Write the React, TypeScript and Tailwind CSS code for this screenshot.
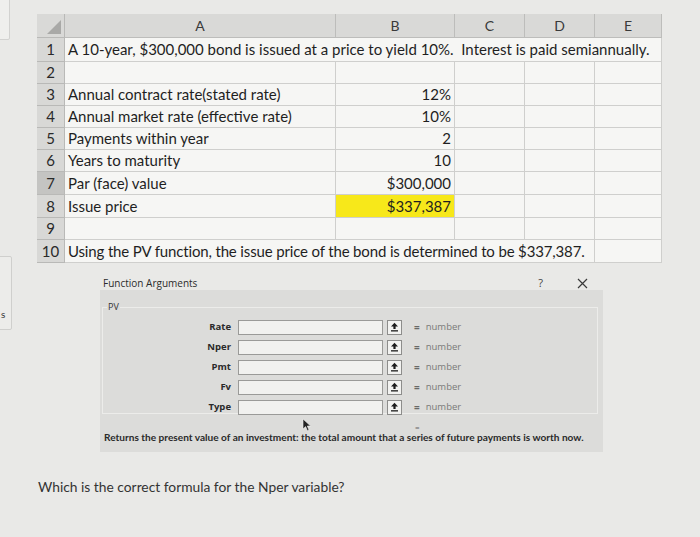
import React from 'react'

// spreadsheet column template: row-number, A, B, C, D, E
const GRID = 'grid grid-cols-[28px_271px_119px_70px_70px_67px]'

const DATA: { n: number; label: string; value: string; hl?: boolean; h: string }[] = [
  { n: 3, label: 'Annual contract rate(stated rate)', value: '12%', h: 'h-[22px]' },
  { n: 4, label: 'Annual market rate (effective rate)', value: '10%', h: 'h-[22px]' },
  { n: 5, label: 'Payments within year', value: '2', h: 'h-[22px]' },
  { n: 6, label: 'Years to maturity', value: '10', h: 'h-[22px]' },
  { n: 7, label: 'Par (face) value', value: '$300,000', h: 'h-[23px]' },
  { n: 8, label: 'Issue price', value: '$337,387', hl: true, h: 'h-[23px]' },
]

const ARGS = ['Rate', 'Nper', 'Pmt', 'Fv', 'Type']

function RowNum({ n, dark }: { n: number; dark?: boolean }) {
  return (
    <div
      className={`flex items-center justify-center border-r border-b border-[#b9b9b7] text-[#2a2a2a] ${
        dark ? 'bg-[#c4c4c2]' : 'bg-[#d8d8d6]'
      }`}
    >
      {n}
    </div>
  )
}

function Cell({ children, right }: { children?: React.ReactNode; right?: boolean }) {
  return (
    <div
      className={`flex items-center border-r border-b border-[#cfcfcd] px-[3px] whitespace-nowrap ${
        right ? 'justify-end' : ''
      }`}
    >
      {children}
    </div>
  )
}

function CollapseBtn() {
  return (
    <div className="flex h-[15px] w-[15px] items-center justify-center border border-[#8d8d8b] bg-[#f2f2f0]">
      <svg width="9" height="10" viewBox="0 0 9 10" aria-hidden>
        <path d="M4.5 0.8 L8 4.6 H5.6 V7 H3.4 V4.6 H1 Z" fill="#1c1c1c" />
        <rect x="1" y="8.2" width="7" height="1.3" fill="#1c1c1c" />
      </svg>
    </div>
  )
}

export default function App() {
  return (
    <div className="relative h-[537px] w-[700px] overflow-hidden bg-[#e9e9e7] font-['Lato',sans-serif] text-[#1f1f1f]">
      {/* bits of other windows at the left edge of the photo */}
      <div className="absolute left-[-6px] top-[-4px] h-[44px] w-[16px] rounded-[2px] border border-[#d2d2d0] bg-[#efefed]" />
      <div className="absolute left-[-6px] top-[256px] h-[74px] w-[18px] rounded-[2px] border border-[#cfcfcd] bg-[#ececea] text-[10px] leading-none">
        <span className="absolute left-[6px] top-[52px] text-[#333]">s</span>
      </div>

      <div className="pl-[37px] pt-[14px]">
        {/* spreadsheet */}
        <div className="w-[625px] text-[15px] leading-none">
          {/* column headers */}
          <div className={`${GRID} h-[24px] bg-[#d9d9d7] text-[14px] text-[#3a3a3a]`}>
            <div className="relative border-r border-b border-[#b9b9b7]">
              <svg className="absolute bottom-[3px] right-[3px]" width="14" height="14" viewBox="0 0 14 14" aria-hidden>
                <path d="M14 0 L14 14 L0 14 Z" fill="#a9a9a7" />
              </svg>
            </div>
            {['A', 'B', 'C', 'D', 'E'].map((c) => (
              <div key={c} className="flex items-center justify-center border-r border-b border-[#bdbdbb]">
                {c}
              </div>
            ))}
          </div>

          <div className="bg-[#f6f6f4]">
            {/* row 1 */}
            <div className={`${GRID} h-[24px]`}>
              <RowNum n={1} />
              <div className="col-span-5 flex items-center border-r border-b border-[#cfcfcd] px-[3px] whitespace-nowrap">
                A 10-year, $300,000 bond is issued at a price to yield 10%.&nbsp; Interest is paid semiannually.
              </div>
            </div>

            {/* row 2 */}
            <div className={`${GRID} h-[22px]`}>
              <RowNum n={2} />
              <Cell />
              <Cell />
              <Cell />
              <Cell />
              <Cell />
            </div>

            {DATA.map((r) => (
              <div key={r.n} className={`${GRID} ${r.h}`}>
                <RowNum n={r.n} dark={r.n === 7} />
                <Cell>{r.label}</Cell>
                {r.hl ? (
                  <div className="flex items-center justify-end border-r border-b border-[#cfcfcd] bg-[#f7e81a] px-[3px]">
                    {r.value}
                  </div>
                ) : (
                  <Cell right>{r.value}</Cell>
                )}
                <Cell />
                <Cell />
                <Cell />
              </div>
            ))}

            {/* row 9 */}
            <div className={`${GRID} h-[22px]`}>
              <RowNum n={9} />
              <Cell />
              <Cell />
              <Cell />
              <Cell />
              <Cell />
            </div>

            {/* row 10 */}
            <div className={`${GRID} h-[23px]`}>
              <RowNum n={10} />
              <div className="col-span-4 flex items-center border-r border-b border-[#cfcfcd] px-[3px] whitespace-nowrap tracking-[-0.15px]">
                Using the PV function, the issue price of the bond is determined to be $337,387.
              </div>
              <Cell />
            </div>
          </div>
        </div>

        {/* Function Arguments dialog */}
        <div className="relative ml-[63px] mt-[13px] w-[503px] font-['Open_Sans',sans-serif]">
          <div className="flex h-[14px] items-center pl-[3px] text-[10px] text-[#2b2b2b]">
            <span>Function Arguments</span>
            <span className="ml-auto mr-[34px] text-[11px] text-[#444]">?</span>
            <svg className="mr-[15px]" width="11" height="11" viewBox="0 0 11 11" aria-hidden>
              <path d="M1 1 L10 10 M10 1 L1 10" stroke="#3a3a3a" strokeWidth="1.2" />
            </svg>
          </div>

          <div className="h-[162px] bg-[#dcdcda] pl-[2px] pr-[5px] pt-[11px]">
            <fieldset className="h-[113px] border border-[#ececea] pt-[4px]">
              <legend className="ml-[4px] px-[1px] text-[9px] leading-[12px] text-[#333]">PV</legend>
              {ARGS.map((a) => (
                <div key={a} className="flex h-[20px] items-center">
                  <div className="w-[128px] text-right text-[9.5px] font-bold text-[#2a2a2a]">{a}</div>
                  <div className="ml-[7px] h-[15px] w-[145px] border border-[#9a9a98] bg-[#f1f1ef]" />
                  <div className="ml-[4px]">
                    <CollapseBtn />
                  </div>
                  <div className="ml-[12px] text-[10px] font-bold text-[#6a6a68]">=</div>
                  <div className="ml-[6px] text-[9.5px] text-[#7a7a78]">number</div>
                </div>
              ))}
            </fieldset>

            <div className="relative h-[10px]">
              <span className="absolute left-[313px] top-[9px] text-[8px] leading-none text-[#666]">=</span>
            </div>
            <div className="pl-[2px] pt-[6px] font-['Lato',sans-serif] text-[10.1px] font-bold text-[#2a2a2a] whitespace-nowrap">
              Returns the present value of an investment: the total amount that a series of future payments is worth now.
            </div>
          </div>

          {/* mouse pointer */}
          <svg className="absolute left-[202px] top-[142px]" width="10" height="14" viewBox="0 0 10 14" aria-hidden>
            <path d="M1 1 L1 11 L3.6 8.6 L5.4 12.8 L7 12.1 L5.3 8 L8.6 8 Z" fill="#222" stroke="#f2f2f0" strokeWidth="0.6" />
          </svg>
        </div>

        <div className="ml-[1px] mt-[26px] text-[13.8px] leading-[18px] text-[#333] font-['Lato',sans-serif]">
          Which is the correct formula for the Nper variable?
        </div>
      </div>
    </div>
  )
}
